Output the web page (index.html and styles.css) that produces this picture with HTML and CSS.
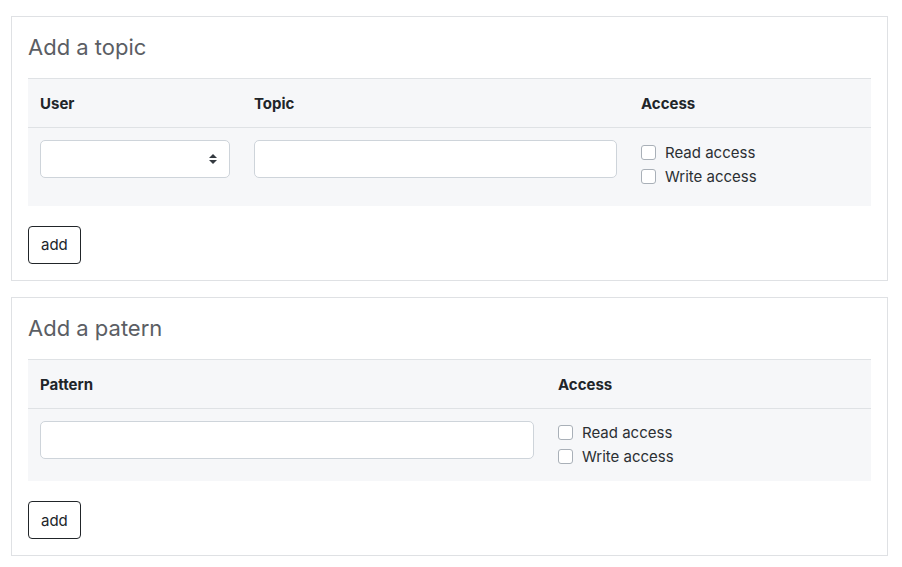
FILE: index.html
```html
<!DOCTYPE html>
<html>
<head>
<meta charset="utf-8">
<link rel="stylesheet" href="styles.css">
</head>
<body>
<div class="page">
  <section class="card">
    <h2 class="card-title">Add a topic</h2>
    <table class="grid">
      <colgroup><col style="width:214px"><col style="width:387px"><col></colgroup>
      <thead><tr><th>User</th><th>Topic</th><th>Access</th></tr></thead>
      <tbody>
        <tr>
          <td>
            <div class="select-wrap">
              <select class="control"><option></option></select>
              <svg class="caret" width="8" height="12" viewBox="0 0 8 12"><path d="M0 5 L4 1 L8 5 Z M0 7 L4 11 L8 7 Z" fill="#343a40"/></svg>
            </div>
          </td>
          <td><input class="control" type="text"></td>
          <td>
            <label class="check"><input type="checkbox"><span>Read access</span></label>
            <label class="check"><input type="checkbox"><span>Write access</span></label>
          </td>
        </tr>
      </tbody>
    </table>
    <button class="btn">add</button>
  </section>
  <section class="card">
    <h2 class="card-title">Add a patern</h2>
    <table class="grid">
      <colgroup><col style="width:518px"><col></colgroup>
      <thead><tr><th>Pattern</th><th>Access</th></tr></thead>
      <tbody>
        <tr class="short">
          <td><input class="control" type="text"></td>
          <td>
            <label class="check"><input type="checkbox"><span>Read access</span></label>
            <label class="check"><input type="checkbox"><span>Write access</span></label>
          </td>
        </tr>
      </tbody>
    </table>
    <button class="btn">add</button>
  </section>
</div>
</body>
</html>
```
FILE: styles.css
```css
* { box-sizing: border-box; }
body {
  margin: 0;
  font-family: Inter, "Noto Sans", "Liberation Sans", sans-serif;
  font-size: 16px;
  color: #212529;
  background: #fff;
}
.page {
  padding: 16px 14px 0 11px;
  display: flex;
  flex-direction: column;
  gap: 16px;
}
.card {
  border: 1px solid #dfe1e4;
  padding: 16px;
}
.card-title {
  margin: 0 0 16px 0;
  font-size: 22px;
  font-weight: 400;
  line-height: 29px;
  color: #5b5e64;
}
.grid {
  width: 100%;
  border-collapse: collapse;
  table-layout: fixed;
  background: #f6f7f9;
  border-top: 1px solid #dfe2e5;
}
.grid th {
  text-align: left;
  font-weight: 700;
  font-size: 15px;
  padding: 13px 12px 11px 12px;
  line-height: 24px;
  border-bottom: 1px solid #dfe2e5;
}
.grid td {
  padding: 12px 12px 0 12px;
  vertical-align: top;
  height: 78px;
}
.grid tr.short td { height: 73px; }
.control {
  display: block;
  width: 100%;
  height: 38px;
  border: 1px solid #ced4da;
  border-radius: 5px;
  background: #fff;
  font: inherit;
  padding: 6px 12px;
  appearance: none;
  -webkit-appearance: none;
  outline: none;
}
.select-wrap { position: relative; }
.caret { position: absolute; right: 13px; top: 13px; }
.check {
  display: flex;
  align-items: center;
  gap: 9px;
  height: 24px;
  font-size: 15px;
  color: #2b2f33;
}
.check input {
  appearance: none;
  -webkit-appearance: none;
  margin: 0;
  width: 15px;
  height: 15px;
  border: 1px solid #a9b0b8;
  border-radius: 3px;
  background: #fff;
}
.btn {
  margin-top: 20px;
  display: block;
  height: 38px;
  padding: 0 12px;
  border: 1px solid #212529;
  border-radius: 4px;
  background: #fff;
  font: inherit;
  font-size: 15px;
  color: #212529;
}
```
